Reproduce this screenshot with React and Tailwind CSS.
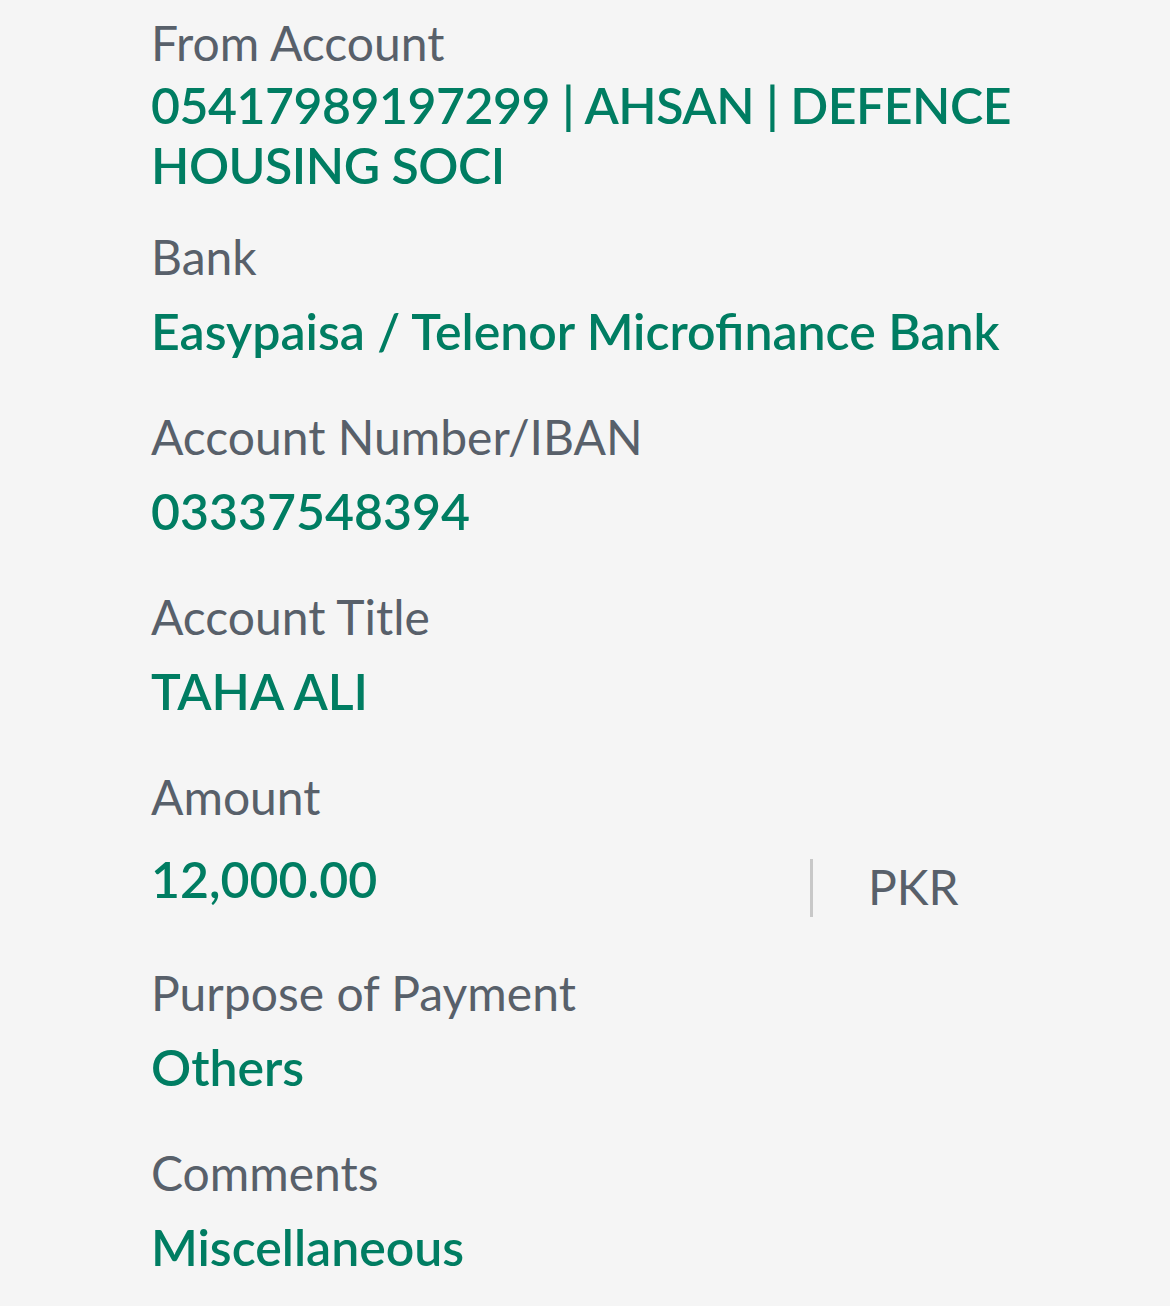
function Field({ label, value }) {
  return (
    <div>
      <p className="text-[48px] leading-[60px] font-normal text-[#58606a]">{label}</p>
      <p className="mt-[14px] text-[50px] leading-[60px] font-semibold text-[#007d62]">{value}</p>
    </div>
  );
}

export default function App() {
  return (
    <main
      className="min-h-[1306px] bg-[#f5f5f5] pl-[151px] pr-[130px] pt-[13px]"
      style={{ fontFamily: 'Lato, "Open Sans", sans-serif' }}
    >
      {/* from account wraps onto two lines */}
      <div>
        <p className="text-[48px] leading-[60px] text-[#58606a]">From Account</p>
        <p className="mt-[2px] text-[50px] leading-[60px] font-semibold tracking-[-0.5px] text-[#007d62]">
          05417989197299 | AHSAN | DEFENCE HOUSING SOCI
        </p>
      </div>

      <div className="mt-[32px] flex flex-col gap-[46px]">
        <Field label="Bank" value="Easypaisa / Telenor Microfinance Bank" />
        <Field label="Account Number/IBAN" value="03337548394" />
        <Field label="Account Title" value="TAHA ALI" />

        <div>
          <p className="text-[48px] leading-[60px] text-[#58606a]">Amount</p>
          <div className="mt-[22px] flex items-start pr-[20px]">
            <p className="flex-1 text-[50px] leading-[60px] font-semibold text-[#007d62]">12,000.00</p>
            <div className="mt-[10px] h-[58px] w-[3px] bg-[#c8c8c8]" />
            <p className="w-[207px] pl-[55px] pt-[8px] text-[48px] leading-[60px] text-[#58606a]">PKR</p>
          </div>
        </div>

        <Field label="Purpose of Payment" value="Others" />
        <Field label="Comments" value="Miscellaneous" />
      </div>
    </main>
  );
}
